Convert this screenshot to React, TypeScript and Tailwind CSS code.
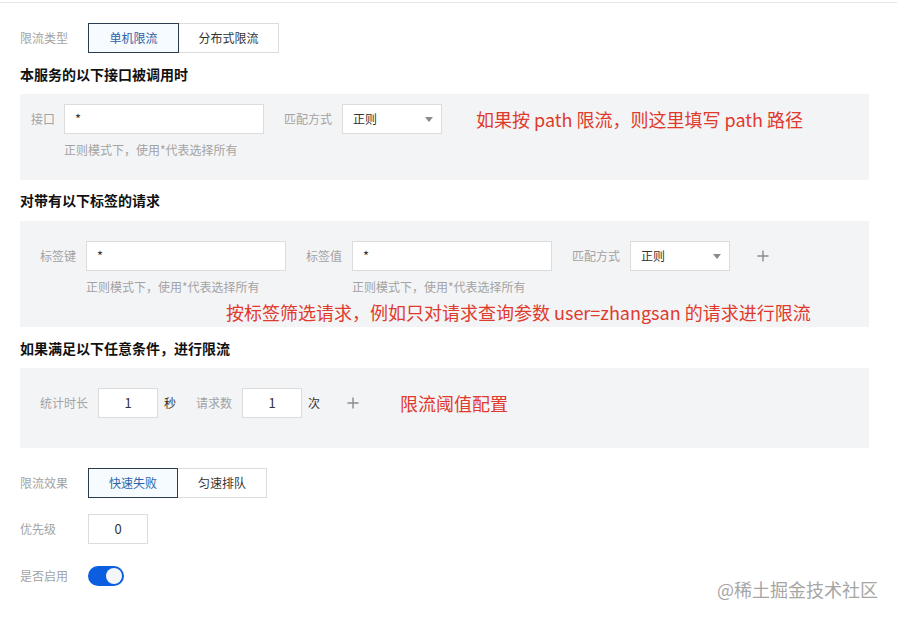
import type { ReactNode } from "react";

const FONT = { fontFamily: '"Noto Sans CJK SC", "Noto Sans", sans-serif' };

function Label({ children, className = "" }: { children: ReactNode; className?: string }) {
  return <span className={`text-[12px] leading-[18px] text-[#a3a3a3] ${className}`}>{children}</span>;
}

function TextInput({ value, width, center }: { value: string; width: string; center?: boolean }) {
  return (
    <div
      className={`flex h-[30px] items-center border border-[#dcdcdc] bg-white px-[10px] text-[13px] text-[#333] ${width} ${
        center ? "justify-center" : ""
      }`}
    >
      {value}
    </div>
  );
}

function Select() {
  return (
    <div className="flex h-[30px] w-[100px] items-center justify-between border border-[#dcdcdc] bg-white pl-[10px] pr-[8px] text-[12px] text-[#333]">
      <span>正则</span>
      <svg width="8" height="5" viewBox="0 0 8 5">
        <path d="M0 0h8L4 5z" fill="#8a8a8a" />
      </svg>
    </div>
  );
}

function Plus() {
  return (
    <svg width="12" height="12" viewBox="0 0 12 12" className="shrink-0">
      <path d="M6 0.5v11M0.5 6h11" stroke="#8a8a8a" strokeWidth="1.4" />
    </svg>
  );
}

function Segmented({ items, widths }: { items: string[]; widths: string[] }) {
  return (
    <div className="flex h-[30px]">
      {items.map((t, i) => (
        <div
          key={t}
          className={`flex items-center justify-center text-[12px] ${widths[i]} ${
            i === 0
              ? "border border-[#2a3b4c] bg-[#f6fbff] text-[#2f62a8]"
              : "border border-l-0 border-[#dcdcdc] bg-white text-[#333]"
          }`}
        >
          {t}
        </div>
      ))}
    </div>
  );
}

function Heading({ children, className = "" }: { children: ReactNode; className?: string }) {
  return <div className={`text-[14px] font-bold leading-[20px] text-[#111] ${className}`}>{children}</div>;
}

const Note = ({ children, className = "" }: { children: ReactNode; className?: string }) => (
  <span className={`text-[18px] leading-[24px] text-[#e03a2d] ${className}`}>{children}</span>
);

export default function App() {
  return (
    <div className="relative h-[618px] w-[897px] overflow-hidden bg-white" style={FONT}>
      <div className="mt-[2px] h-px w-full bg-[#e6e6e6]" />

      <div className="pl-[20px]">
        {/* 限流类型 */}
        <div className="mt-[20px] flex items-center">
          <Label className="w-[68px]">限流类型</Label>
          <Segmented items={["单机限流", "分布式限流"]} widths={["w-[91px]", "w-[100px]"]} />
        </div>

        <Heading className="mt-[11px]">本服务的以下接口被调用时</Heading>

        <div className="mt-[10px] h-[86px] w-[849px] bg-[#f3f4f6] pl-[11px] pt-[10px]">
          <div className="flex items-center">
            <Label className="w-[33px]">接口</Label>
            <TextInput value="*" width="w-[200px]" />
            <Label className="ml-[20px] w-[58px]">匹配方式</Label>
            <Select />
            <Note className="ml-[34px]">如果按 path 限流，则这里填写 path 路径</Note>
          </div>
          <Label className="ml-[33px] mt-[7px] block">正则模式下，使用*代表选择所有</Label>
        </div>

        <Heading className="mt-[10px]">对带有以下标签的请求</Heading>

        <div className="mt-[11px] h-[106px] w-[849px] bg-[#f3f4f6] pl-[20px] pt-[20px]">
          <div className="flex items-center">
            <Label className="w-[46px]">标签键</Label>
            <TextInput value="*" width="w-[200px]" />
            <Label className="ml-[20px] w-[46px]">标签值</Label>
            <TextInput value="*" width="w-[200px]" />
            <Label className="ml-[20px] w-[58px]">匹配方式</Label>
            <Select />
            <span className="ml-[27px]">
              <Plus />
            </span>
          </div>
          <div className="mt-[7px] flex">
            <Label className="ml-[46px] w-[266px]">正则模式下，使用*代表选择所有</Label>
            <Label>正则模式下，使用*代表选择所有</Label>
          </div>
          <Note className="ml-[186px] mt-[4px] block">按标签筛选请求，例如只对请求查询参数 user=zhangsan 的请求进行限流</Note>
        </div>

        <Heading className="mt-[11px]">如果满足以下任意条件，进行限流</Heading>

        <div className="mt-[10px] h-[80px] w-[849px] bg-[#f3f4f6] pl-[20px] pt-[20px]">
          <div className="flex items-center">
            <Label className="w-[58px]">统计时长</Label>
            <TextInput value="1" width="w-[60px]" center />
            <span className="ml-[6px] text-[12px] text-[#333]">秒</span>
            <Label className="ml-[20px] w-[46px]">请求数</Label>
            <TextInput value="1" width="w-[60px]" center />
            <span className="ml-[6px] text-[12px] text-[#333]">次</span>
            <span className="ml-[27px]">
              <Plus />
            </span>
            <Note className="ml-[41px]">限流阈值配置</Note>
          </div>
        </div>

        {/* 限流效果 */}
        <div className="mt-[20px] flex items-center">
          <Label className="w-[68px]">限流效果</Label>
          <Segmented items={["快速失败", "匀速排队"]} widths={["w-[90px]", "w-[89px]"]} />
        </div>

        <div className="mt-[16px] flex items-center">
          <Label className="w-[68px]">优先级</Label>
          <TextInput value="0" width="w-[60px]" center />
        </div>

        <div className="mt-[17px] flex h-[30px] items-center">
          <Label className="w-[68px]">是否启用</Label>
          <div className="flex h-[20px] w-[36px] items-center justify-end rounded-full bg-[#0b5ee0] pr-[2px]">
            <div className="h-[16px] w-[16px] rounded-full bg-[#f4f6f8]" />
          </div>
        </div>
      </div>

      <div className="absolute right-[19px] top-[577px] text-[18px] leading-[24px] text-[#a6a6a6]">@稀土掘金技术社区</div>
    </div>
  );
}
